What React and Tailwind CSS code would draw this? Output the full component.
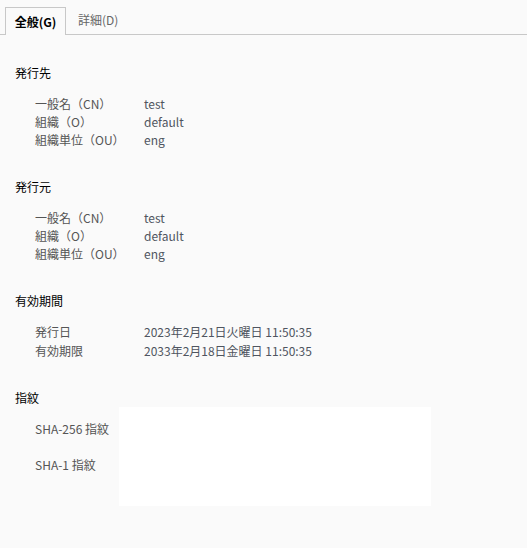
const sections = [
  {
    title: '発行先',
    rows: [
      ['一般名（CN）', 'test'],
      ['組織（O）', 'default'],
      ['組織単位（OU）', 'eng'],
    ],
  },
  {
    title: '発行元',
    rows: [
      ['一般名（CN）', 'test'],
      ['組織（O）', 'default'],
      ['組織単位（OU）', 'eng'],
    ],
  },
  {
    title: '有効期間',
    rows: [
      ['発行日', '2023年2月21日火曜日 11:50:35'],
      ['有効期限', '2033年2月18日金曜日 11:50:35'],
    ],
  },
];

export default function App() {
  return (
    <div
      className="w-[527px] h-[548px] bg-[#fafafa] text-[12px] leading-[18px] overflow-hidden"
      style={{ fontFamily: '"Noto Sans CJK JP", "Noto Sans", sans-serif' }}
    >
      <div className="flex items-end h-[35px] border-b border-[#c8c8c8] pl-[5px]">
        <div className="h-[28px] w-[61px] -mb-px border border-b-0 border-[#c8c8c8] bg-[#fafafa] flex items-center justify-center font-bold text-black">
          全般(G)
        </div>
        <div className="h-[28px] px-[12px] flex items-center text-[#666]">詳細(D)</div>
      </div>

      <div className="pl-[15px] pt-[29px]">
        {sections.map((s) => (
          <div key={s.title} className="mb-[29px]">
            <div className="text-black mb-[13px]">{s.title}</div>
            {s.rows.map(([k, v], i) => (
              <div key={k} className={`flex ${i > 0 && s.rows.length === 2 ? 'mt-px' : ''}`}>
                <div className="w-[129px] shrink-0 pl-[20px] text-[#555]">{k}</div>
                <div className="text-[#4f5560]">{v}</div>
              </div>
            ))}
          </div>
        ))}

        <div>
          <div className="text-black">指紋</div>
          <div className="flex">
            <div className="w-[104px] shrink-0 pl-[20px] pt-[13px] text-[#555]">
              <div>SHA-256 指紋</div>
              <div className="mt-[18px]">SHA-1 指紋</div>
            </div>
            <div className="w-[312px] h-[99px] bg-white" />
          </div>
        </div>
      </div>
    </div>
  );
}
